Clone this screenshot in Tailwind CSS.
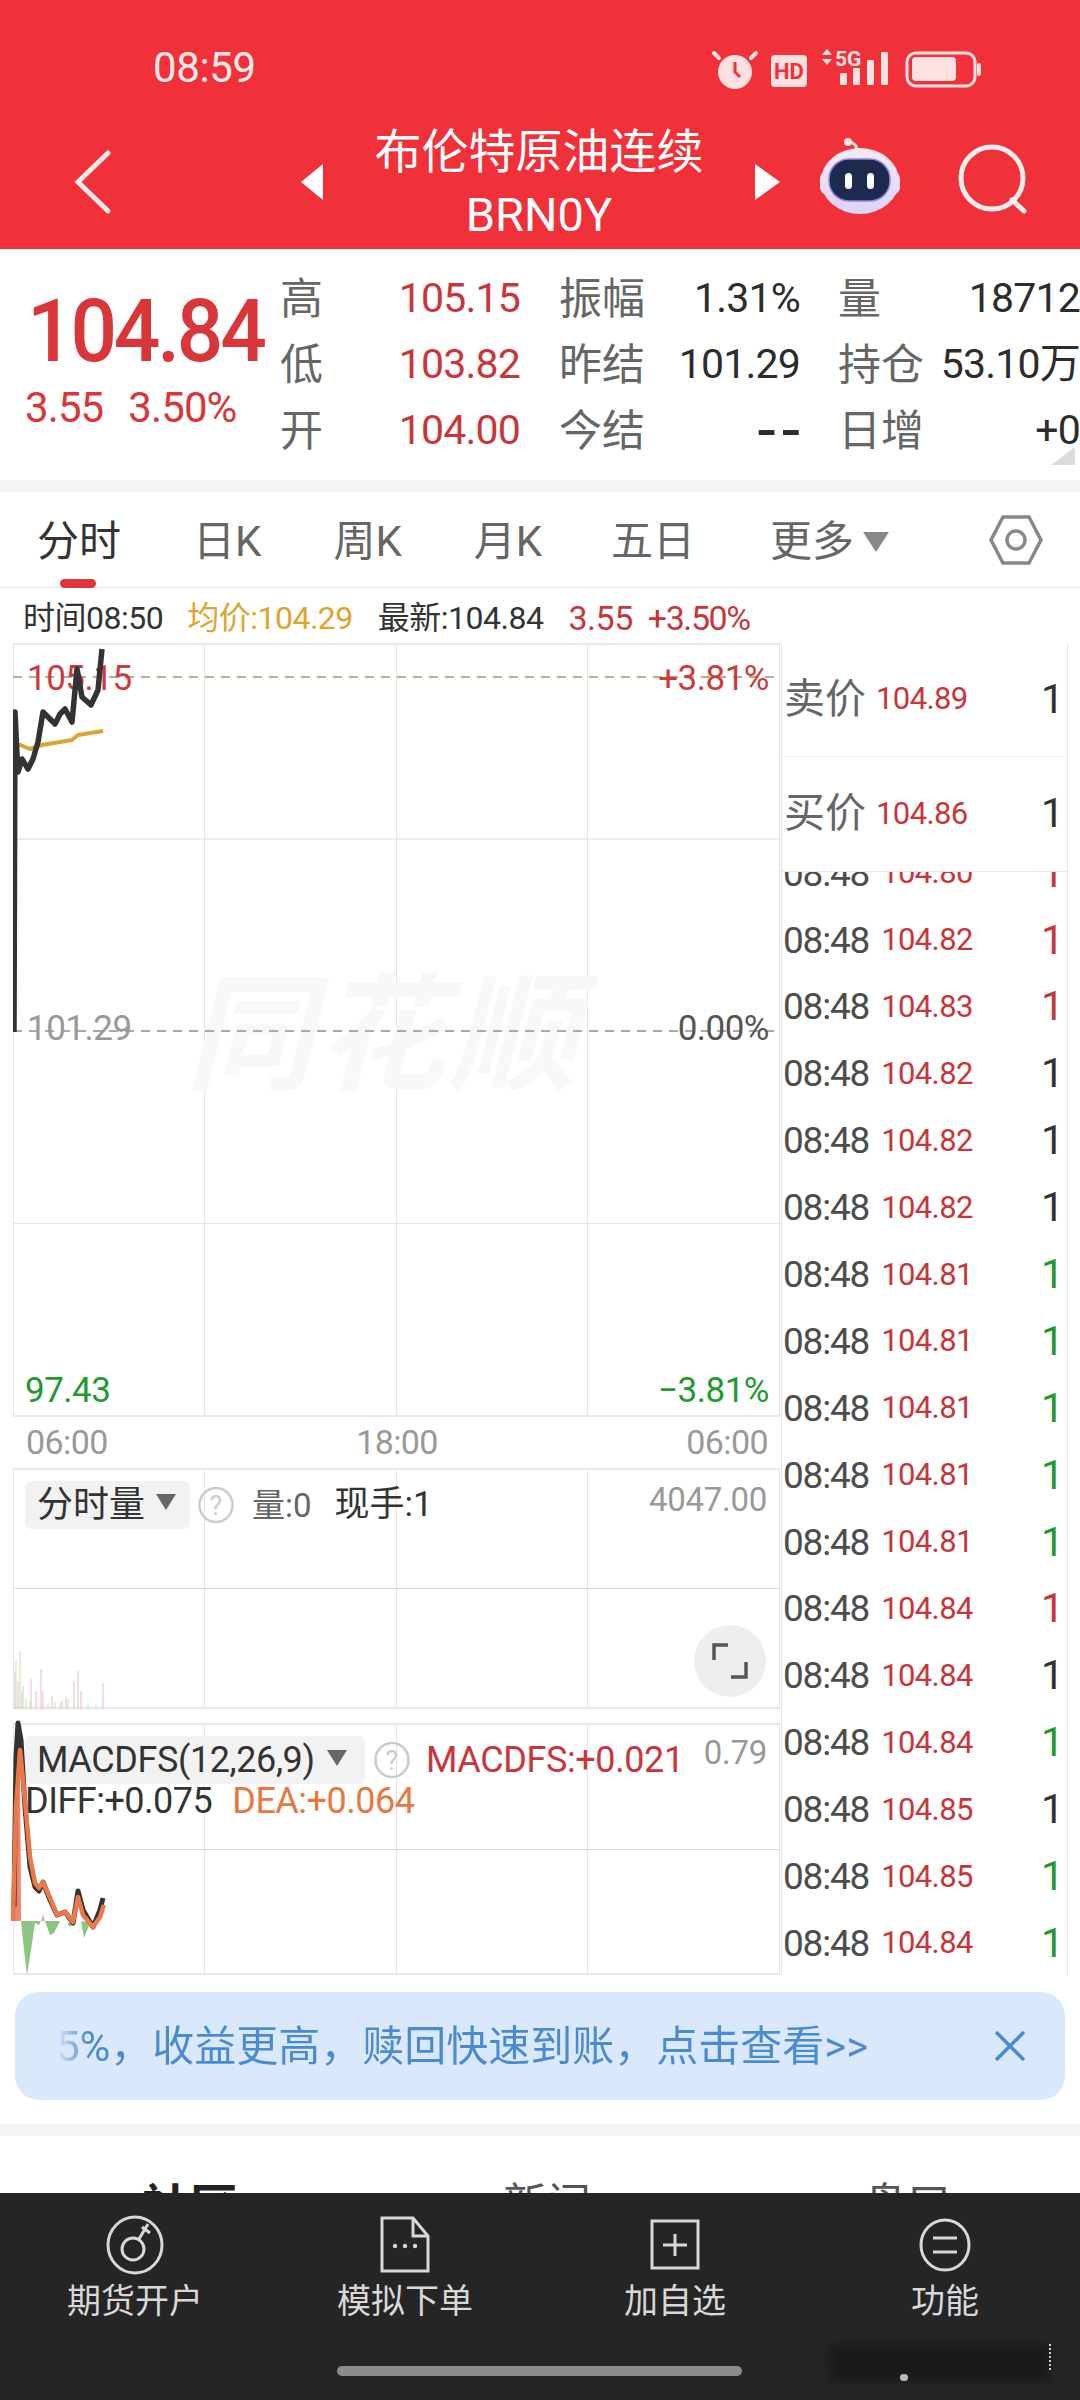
<!DOCTYPE html>
<html lang="zh-CN">
<head>
<meta charset="UTF-8" />
<meta name="viewport" content="width=device-width, initial-scale=1.0" />
<title>布伦特原油连续</title>
<script src="https://cdn.jsdelivr.net/npm/@tailwindcss/browser@4"></script>
</head>
<body class="relative w-[1080px] h-[2400px] overflow-hidden bg-white [font-family:Roboto,'Noto_Sans_CJK_SC',sans-serif]">

  <!-- 顶部红色区域 -->
  <header class="h-[249px] bg-[#f0313a] text-white">
    <div class="flex h-[118px] items-start pt-[42px]">
      <span class="ml-[153px] w-[547px] text-[42px] leading-[52px] tracking-[-0.4px] text-[#ffeaea]">08:59</span>
      <svg class="mt-[2px]" width="300" height="50" viewBox="700 44 300 50" fill="#ffe0e0">
        <circle cx="735" cy="72" r="17" />
        <path d="M719 58l-5 -5M751 58l5 -5" stroke="#ffe0e0" stroke-width="4" stroke-linecap="round" />
        <path d="M735 62v10l5 5" stroke="#f0313a" stroke-width="3" fill="none" />
        <rect x="771" y="55" width="36" height="32" rx="4" />
        <text x="789" y="79" text-anchor="middle" font-size="22" font-weight="700" fill="#f0313a" font-family="Roboto">HD</text>
        <path d="M827 49l5 6h-10zM827 65l5 -6h-10z" />
        <text x="835" y="66" font-size="21" font-weight="700" font-family="Roboto">5G</text>
        <rect x="840" y="73" width="7" height="12" rx="1" />
        <rect x="853" y="68" width="7" height="17" rx="1" />
        <rect x="867" y="60" width="7" height="25" rx="1" />
        <rect x="881" y="52" width="7" height="33" rx="1" />
        <rect x="907" y="53" width="68" height="33" rx="9" fill="none" stroke="#ffe0e0" stroke-width="3" />
        <rect x="912" y="57" width="44" height="24" rx="4" />
        <rect x="977" y="63" width="4" height="13" rx="2" />
      </svg>
    </div>
    <div class="flex h-[131px] items-center">
      <svg class="ml-[72px] mr-[185px] mt-[-4px]" width="44" height="66" viewBox="0 0 44 66" fill="none" stroke="#ffe8e8" stroke-width="5" stroke-linecap="round"><path d="M36 4L6 33l30 29" /></svg>
      <svg class="mt-[-4px]" width="22" height="36" viewBox="0 0 22 36" fill="#fff"><path d="M22 0v36L0 18z" /></svg>
      <div class="w-[432px] text-center">
        <div class="text-[47px] leading-[62px]">布伦特原油连续</div>
        <div class="text-[47px] leading-[64px]">BRN0Y</div>
      </div>
      <svg class="mt-[-4px]" width="25" height="36" viewBox="0 0 25 36" fill="#fff"><path d="M0 0v36l25 -18z" /></svg>
      <svg class="ml-[36px] mt-[-14px]" width="90" height="80" viewBox="816 136 90 80">
        <defs>
          <linearGradient id="casco" x1="0" y1="0" x2="0" y2="1"><stop offset="0" stop-color="#fbe9f4" /><stop offset="1" stop-color="#d9d3f6" /></linearGradient>
        </defs>
        <path d="M857 150c0 -6 -4 -9 -9 -9" stroke="#ffe6ea" stroke-width="3" fill="none" />
        <circle cx="848" cy="141" r="4" fill="#ffe6ea" />
        <rect x="820" y="170" width="80" height="24" rx="8" fill="#ece6f8" />
        <ellipse cx="860" cy="180" rx="39" ry="33" fill="url(#casco)" />
        <rect x="829" y="158" width="61" height="42" rx="20" fill="#1d2a4e" stroke="#8f86e6" stroke-width="1.5" />
        <rect x="845" y="172" width="7" height="16" rx="3.5" fill="#fff" />
        <rect x="867" y="172" width="7" height="16" rx="3.5" fill="#fff" />
      </svg>
      <svg class="ml-[46px] mt-[-10px]" width="80" height="80" viewBox="950 138 80 80" fill="none" stroke="#ffeeee" stroke-width="5" stroke-linecap="round"><circle cx="990" cy="177" r="31" /><path d="M1010 199l12 11" /></svg>
    </div>
  </header>

  <!-- 报价 -->
  <section class="relative flex h-[231px]">
    <div class="w-[280px] pl-[27px] pt-[42px] text-[#d9363a]">
      <div class="scale-y-[1.07] origin-left text-[82px] font-medium leading-[80px] tracking-[-3.2px] whitespace-nowrap">104.84</div>
      <div class="-ml-[2px] mt-[17px] flex gap-[25px] text-[42px] leading-[40px] tracking-[-0.9px]"><span>3.55</span><span>3.50%</span></div>
    </div>
    <div class="mt-[17px] grid h-[198px] grid-cols-[100px_140px_125px_155px_125px_155px] grid-rows-3 items-center text-[41px] tracking-[-0.8px] text-[#2c2c2c]">
      <span class="text-[43px] text-[#666]">高</span><span class="text-right text-[#c9363a]">105.15</span><span class="pl-[39px] text-[43px] tracking-normal text-[#666]">振幅</span><span class="text-right">1.31%</span><span class="pl-[38px] text-[43px] text-[#666]">量</span><span class="text-right">18712</span>
      <span class="text-[43px] text-[#666]">低</span><span class="text-right text-[#c9363a]">103.82</span><span class="pl-[39px] text-[43px] tracking-normal text-[#666]">昨结</span><span class="text-right">101.29</span><span class="pl-[38px] text-[43px] tracking-normal whitespace-nowrap text-[#666]">持仓</span><span class="text-right whitespace-nowrap">53.10万</span>
      <span class="text-[43px] text-[#666]">开</span><span class="text-right text-[#c9363a]">104.00</span><span class="pl-[39px] text-[43px] tracking-normal text-[#666]">今结</span><span class="-mr-[6px] text-right text-[66px] leading-[40px] tracking-[6px]">--</span><span class="pl-[38px] text-[43px] tracking-normal whitespace-nowrap text-[#666]">日增</span><span class="text-right">+0</span>
    </div>
    <svg class="absolute right-[5px] bottom-[15px]" width="24" height="18" viewBox="0 0 24 18" fill="#dcdcdc"><path d="M24 0v18H0z" /></svg>
  </section>
  <div class="h-[12px] bg-[#f5f5f5]"></div>

  <!-- 周期切换 -->
  <nav class="relative flex h-[96px] items-center border-b border-[#e6e6e6] pt-[3px] text-[42px] text-[#666]">
    <span class="ml-[37px] text-[#333]">分时</span>
    <span class="ml-[72px]">日K</span>
    <span class="ml-[72px]">周K</span>
    <span class="ml-[72px]">月K</span>
    <span class="ml-[69px]">五日</span>
    <span class="ml-[75px]">更多</span>
    <svg class="ml-[9px] mt-[2px]" width="26" height="20" viewBox="0 0 26 20" fill="#888"><path d="M0 0h26L13 20z" /></svg>
    <svg class="ml-[100px] mt-[-3px]" width="54" height="52" viewBox="0 0 54 52" fill="none" stroke="#888" stroke-width="3.5"><path d="M14 3h26l12 23-12 23H14L2 26z" /><circle cx="27" cy="26" r="9" /></svg>
    <div class="absolute left-[60px] bottom-[-1px] h-[9px] w-[36px] rounded-full bg-[#e0343a]"></div>
  </nav>

  <!-- 分时信息 -->
  <div class="flex h-[55px] items-center pt-[5px] text-[32px] tracking-[-0.5px]">
    <span class="ml-[23px] text-[#333]">时间08:50</span>
    <span class="ml-[24px] text-[#dca52f]">均价:104.29</span>
    <span class="ml-[25px] text-[#333]">最新:104.84</span>
    <span class="ml-[25px] text-[34px] text-[#c9363a]">3.55</span>
    <span class="ml-[15px] text-[34px] tracking-[-1.4px] text-[#c9363a]">+3.50%</span>
  </div>

  <div class="flex h-[1332px]">
    <!-- 图表 -->
    <div class="w-[781px] pl-[13px]">
      <div class="relative h-[774px] w-[767px] border-t-2 border-b-2 border-[#e8e8e8]">
        <div class="grid h-full grid-cols-4 grid-rows-4 border-x border-[#e4e4e4]">
          <div class="col-span-4 row-start-2 border-t-2 border-[#ececec]"></div>
          <div class="col-span-4 row-start-4 border-t border-[#e4e4e4]"></div>
        </div>
        <div class="absolute inset-0 grid grid-cols-4">
          <div class="border-r border-[#e4e4e4]"></div><div class="border-r border-[#e4e4e4]"></div><div class="border-r border-[#e4e4e4]"></div><div></div>
        </div>
        <div class="absolute left-[172px] top-[326px] text-[128px] font-bold italic leading-[130px] tracking-[4px] text-[#f8f8f8]">同花顺</div>
        <svg class="absolute inset-0" width="767" height="774" viewBox="13 643 767 774" fill="none">
          <path d="M13 675H778" stroke="#b9ad85" stroke-width="2" stroke-dasharray="9 7" />
          <path d="M13 1029H778" stroke="#aaa" stroke-width="2" stroke-dasharray="9 7" />
        </svg>
        <span class="absolute left-[14px] top-[8px] text-[35px] tracking-[-0.5px] text-[#cc3a3e]">105.15</span>
        <span class="absolute right-[11px] top-[8px] text-[35px] tracking-[-0.5px] text-[#cc3a3e]">+3.81%</span>
        <span class="absolute left-[14px] top-[358px] text-[35px] tracking-[-0.5px] text-[#999]">101.29</span>
        <span class="absolute right-[11px] top-[358px] text-[35px] tracking-[-0.5px] text-[#555]">0.00%</span>
        <span class="absolute left-[12px] top-[720px] text-[35px] tracking-[-0.5px] text-[#1f9a2e]">97.43</span>
        <span class="absolute right-[11px] top-[720px] text-[35px] tracking-[-0.5px] text-[#1f9a2e]">−3.81%</span>
        <svg class="absolute inset-0" width="767" height="774" viewBox="13 643 767 774" fill="none" stroke-linejoin="round">
          <path d="M18 742L30 747 42 743 72 738 78 733 103 729" stroke="#dca52f" stroke-width="4" />
          <path d="M14 1030L15 710 17 753 18 770 22 757 28 767 33 757 38 740 43 710 50 717 55 722 60 712 65 707 72 720 77 667 82 695 91 703 98 688 102 647" stroke="#333" stroke-width="5.5" />
        </svg>
      </div>

      <div class="flex h-[51px] items-center justify-between px-[13px] text-[34px] tracking-[-0.6px] text-[#999]">
        <span>06:00</span><span>18:00</span><span>06:00</span>
      </div>

      <!-- 分时量 -->
      <div class="relative h-[241px] w-[767px] border-y-2 border-[#e8e8e8]">
        <div class="absolute inset-0 grid grid-cols-4 border-x border-[#e4e4e4]">
          <div class="border-r border-[#e4e4e4]"></div><div class="border-r border-[#e4e4e4]"></div><div class="border-r border-[#e4e4e4]"></div><div></div>
        </div>
        <div class="absolute left-0 right-0 top-[118px] border-t border-[#dcdcdc]"></div>
        <svg class="absolute inset-0" width="767" height="239" viewBox="13 1469 767 239" fill="none">
          <path d="M15 1708V1671M18 1708V1680M22 1708V1690M31 1708V1678M36 1708V1690M41 1708V1668M43 1708V1690M52 1708V1695M62 1708V1700M66 1708V1696M74 1708V1680M78 1708V1670M81 1708V1690M103 1708V1682" stroke="#ecbcc0" stroke-width="1" />
          <path d="M16 1708V1660M20 1708V1650M23 1708V1685M26 1708V1698M30 1708V1700M48 1708V1702M55 1708V1700M60 1708V1702M68 1708V1698M88 1708V1702M96 1708V1704" stroke="#c5dfb9" stroke-width="1" />
        </svg>
        <div class="absolute left-[12px] top-[9px] flex items-center">
          <div class="flex h-[48px] w-[165px] items-center rounded-[6px] bg-[#f2f2f2] pl-[12px] text-[36px] text-[#333]">分时量<svg class="ml-[11px] mt-[-6px]" width="20" height="16" viewBox="0 0 20 16" fill="#666"><path d="M0 0h20L10 16z" /></svg></div>
          <svg class="ml-[8px]" width="36" height="38" viewBox="0 0 36 38"><ellipse cx="18" cy="19" rx="16.5" ry="17" fill="none" stroke="#ccc" stroke-width="2.5" /><text x="18" y="29" text-anchor="middle" font-size="27" fill="#ccc" font-family="Roboto">?</text></svg>
          <span class="ml-[18px] text-[33px] text-[#666]">量:0</span>
          <span class="ml-[23px] text-[35px] text-[#333]">现手:1</span>
        </div>
        <span class="absolute right-[13px] top-[5px] text-[33px] tracking-[-0.3px] text-[#999]">4047.00</span>
        <div class="absolute left-[681px] top-[155px] flex h-[72px] w-[72px] items-center justify-center rounded-full bg-[#eeeeee]">
          <svg width="36" height="36" viewBox="0 0 36 36" fill="none" stroke="#555" stroke-width="3.5"><path d="M2 17V2H16M34 19V34H19" /></svg>
        </div>
      </div>

      <!-- MACD -->
      <div class="relative mt-[14px] h-[252px] w-[767px] border-y-2 border-[#e8e8e8]">
        <div class="absolute inset-0 grid grid-cols-4 border-x border-[#e4e4e4]">
          <div class="border-r border-[#e4e4e4]"></div><div class="border-r border-[#e4e4e4]"></div><div class="border-r border-[#e4e4e4]"></div><div></div>
        </div>
        <div class="absolute left-0 right-0 top-[124px] border-t border-[#dcdcdc]"></div>
        <div class="absolute left-[12px] top-[8px] flex items-center">
          <div class="flex h-[48px] w-[340px] items-center rounded-[6px] bg-[#f2f2f2] pl-[12px] text-[36px] tracking-[-0.4px] whitespace-nowrap text-[#333]">MACDFS(12,26,9)<svg class="ml-[12px] mt-[-4px]" width="20" height="16" viewBox="0 0 20 16" fill="#666"><path d="M0 0h20L10 16z" /></svg></div>
          <svg class="ml-[9px]" width="36" height="38" viewBox="0 0 36 38"><ellipse cx="18" cy="19" rx="16.5" ry="17" fill="none" stroke="#ccc" stroke-width="2.5" /><text x="18" y="29" text-anchor="middle" font-size="27" fill="#ccc" font-family="Roboto">?</text></svg>
          <span class="ml-[16px] text-[36px] tracking-[-0.4px] whitespace-nowrap text-[#c9363a]">MACDFS:+0.021</span>
        </div>
        <span class="absolute right-[13px] top-[3px] text-[33px] tracking-[-0.3px] text-[#999]">0.79</span>
        <div class="absolute left-[12px] top-[49px] flex gap-[20px] text-[36px] tracking-[-0.5px] whitespace-nowrap">
          <span class="text-[#333]">DIFF:+0.075</span><span class="text-[#e8783f]">DEA:+0.064</span>
        </div>
        <svg class="absolute inset-0" width="767" height="248" viewBox="13 1725 767 248" fill="none" stroke-linejoin="round" overflow="visible">
          <path d="M12 1921L16 1800 20 1750 21 1921z" fill="#f0836a" stroke="none" />
          <path d="M41 1921l2 -7 2 7z" fill="#e6a9ad" stroke="none" />
          <path d="M21 1921L24 1950 27 1975 31 1950 35 1923 39 1925 41 1921zM45 1921L50 1935 54 1933 60 1921zM67 1923L70 1927 73 1923zM81 1921L84 1938 90 1923z" fill="#8cc583" stroke="none" />
          <path d="M14 1907L16 1757 18 1723 21 1740 25 1807 30 1867 35 1887 39 1891 43 1882 50 1900 57 1915 65 1912 73 1923 78 1891 83 1910 93 1927 100 1910 103 1898" stroke="#333" stroke-width="5" />
          <path d="M13 1921L16 1807 20 1750 25 1800 30 1857 35 1883 39 1888 43 1882 50 1898 57 1915 65 1912 73 1922 78 1897 83 1915 93 1927 100 1917 104 1905" stroke="#ec7748" stroke-width="4.5" />
        </svg>
      </div>
    </div>

    <!-- 盘口和明细 -->
    <div class="flex h-[1332px] w-[287px] flex-col border-x border-[#e6e6e6]">
      <div class="flex h-[114px] items-center border-b border-[#f2f2f2] pl-[2px] pr-[3px]">
        <span class="text-[41px] text-[#666]">卖价</span><span class="ml-[10px] text-[31px] tracking-[-0.6px] text-[#c9363a]">104.89</span><span class="ml-auto text-[41px] text-[#333]">1</span>
      </div>
      <div class="flex h-[115px] items-center border-b border-[#e6e6e6] pl-[2px] pr-[3px]">
        <span class="text-[41px] text-[#666]">买价</span><span class="ml-[10px] text-[31px] tracking-[-0.6px] text-[#c9363a]">104.86</span><span class="ml-auto text-[41px] text-[#333]">1</span>
      </div>
      <div id="trades" class="h-[1103px] overflow-hidden"></div>
    </div>
  </div>

  <!-- 提示条 -->
  <div class="mx-[15px] mt-[17px] flex h-[108px] items-center rounded-[24px] bg-[#d9e8fb] pl-[41px]">
    <span class="bg-gradient-to-r from-[#d9e8fb] from-0% to-[#4a8ad0] to-4% bg-clip-text text-[42px] whitespace-nowrap text-transparent">5%，收益更高，赎回快速到账，点击查看>></span>
    <svg class="ml-auto mr-[40px]" width="30" height="30" viewBox="0 0 30 30" fill="none" stroke="#4a8ad0" stroke-width="3.5"><path d="M1 1l28 28M29 1L1 29" /></svg>
  </div>
  <div class="mt-[24px] h-[12px] bg-[#f5f5f5]"></div>
  <div class="flex pt-[36px] text-[44px] text-[#555]">
    <span class="ml-[142px] text-[48px] font-bold text-[#222]">社区</span>
    <span class="ml-[265px]">新闻</span>
    <span class="ml-[272px]">盘口</span>
  </div>

  <!-- 底部栏 -->
  <footer class="absolute bottom-0 left-0 h-[207px] w-[1080px] bg-[#252525]">
    <div class="grid grid-cols-4 pt-[22px] text-[34px] text-[#d8d8d8]">
      <div class="flex flex-col items-center gap-[1px]">
        <svg width="60" height="60" viewBox="0 0 60 60" fill="none" stroke="#d8d8d8" stroke-width="3"><ellipse cx="30" cy="30" rx="27" ry="28" /><circle cx="28" cy="34" r="11" /><path d="M34 24l9 -15M37 12l8 6" /></svg>
        <span>期货开户</span>
      </div>
      <div class="flex flex-col items-center gap-[1px]">
        <svg width="60" height="60" viewBox="0 0 60 60" fill="none" stroke="#d8d8d8" stroke-width="3"><path d="M7 3H38L53 21V56H7z" /><path d="M38 3V21H53" /><circle cx="20" cy="31" r="2.2" fill="#d8d8d8" stroke="none" /><circle cx="30" cy="31" r="2.2" fill="#d8d8d8" stroke="none" /><circle cx="40" cy="31" r="2.2" fill="#d8d8d8" stroke="none" /></svg>
        <span>模拟下单</span>
      </div>
      <div class="flex flex-col items-center gap-[1px]">
        <svg width="60" height="60" viewBox="0 0 60 60" fill="none" stroke="#d8d8d8" stroke-width="3"><rect x="7" y="6" width="46" height="47" /><path d="M30 19V41M18 30H42" /></svg>
        <span>加自选</span>
      </div>
      <div class="flex flex-col items-center gap-[1px]">
        <svg width="60" height="60" viewBox="0 0 60 60" fill="none" stroke="#d8d8d8" stroke-width="3"><ellipse cx="30" cy="30" rx="24" ry="25" /><path d="M18 23H42M18 37H42" /></svg>
        <span>功能</span>
      </div>
    </div>
    <div class="absolute left-[337px] top-[173px] h-[10px] w-[405px] rounded-full bg-[#8c8c8c]"></div>
    <div class="absolute left-[830px] top-[152px] h-[36px] w-[220px] bg-black/30 blur-[4px]"></div>
    <div class="absolute left-[900px] top-[181px] h-[7px] w-[8px] rounded-full bg-white/70"></div>
    <div class="absolute left-[1049px] top-[151px] h-[26px] w-[3px] border-l-2 border-dotted border-white/80"></div>
  </footer>

<script>
// 成交明细
const trades = [
  ['104.80', 'text-[#c9363a]'], ['104.82', 'text-[#c9363a]'], ['104.83', 'text-[#c9363a]'],
  ['104.82', 'text-[#333]'], ['104.82', 'text-[#333]'], ['104.82', 'text-[#333]'],
  ['104.81', 'text-[#1f9a2e]'], ['104.81', 'text-[#1f9a2e]'], ['104.81', 'text-[#1f9a2e]'],
  ['104.81', 'text-[#1f9a2e]'], ['104.81', 'text-[#1f9a2e]'], ['104.84', 'text-[#c9363a]'],
  ['104.84', 'text-[#333]'], ['104.84', 'text-[#1f9a2e]'], ['104.85', 'text-[#333]'],
  ['104.85', 'text-[#1f9a2e]'], ['104.84', 'text-[#1f9a2e]']
];
const tradesEl = document.getElementById('trades');
tradesEl.innerHTML = trades.map(([price, color], i) => `
  <div class="flex h-[66.9px] items-center pl-[1px] pr-[3px] ${i === 0 ? '-mt-[32px]' : ''}">
    <span class="text-[37px] tracking-[-1.2px] text-[#4d4d4d]">08:48</span>
    <span class="ml-[12px] text-[31px] tracking-[-0.6px] text-[#c9363a]">${price}</span>
    <span class="ml-auto text-[41px] ${color}">1</span>
  </div>
`).join('');
</script>

</body>
</html>
